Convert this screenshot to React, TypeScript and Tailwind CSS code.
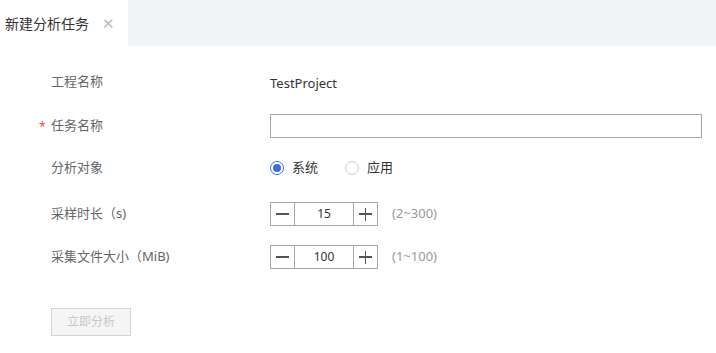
import React, { useState } from 'react';

const font = { fontFamily: '"Noto Sans", "Noto Sans CJK SC", sans-serif' };

const Stepper: React.FC<{ value: number; hint: string }> = ({ value, hint }) => (
  <div className="flex items-center">
    <div className="flex h-[24px] w-[108px] border border-[#a6a6a6]">
      <button className="flex w-[24px] items-center justify-center border-r border-[#a6a6a6]">
        <span className="block h-[1.5px] w-[13px] bg-[#555]" />
      </button>
      <div className="flex flex-1 items-center justify-center text-[12px] text-[#333]">{value}</div>
      <button className="relative flex w-[24px] items-center justify-center border-l border-[#a6a6a6]">
        <span className="absolute h-[1.5px] w-[13px] bg-[#555]" />
        <span className="absolute h-[13px] w-[1.5px] bg-[#555]" />
      </button>
    </div>
    <span className="ml-[14px] text-[13px] text-[#999]">{hint}</span>
  </div>
);

const Row: React.FC<{ label: string; required?: boolean; children: React.ReactNode; h: string }> = ({ label, required, children, h }) => (
  <div className={`flex items-center ${h}`}>
    <div className="relative w-[270px] shrink-0 pl-[51px] text-[13px] text-[#666]">
      {required && <span className="absolute left-[39px] top-[2px] text-[12px] text-[#e5484d]">*</span>}
      {label}
    </div>
    <div className="flex-1">{children}</div>
  </div>
);

export default function App() {
  const [target, setTarget] = useState('sys');
  return (
    <div className="h-[353px] w-[716px] bg-white" style={font}>
      <div className="flex h-[46px] bg-[#f3f4f7]">
        <div className="flex w-[128px] items-center bg-white pl-[5px]">
          <span className="text-[14px] text-[#333]">新建分析任务</span>
          <span className="ml-[13px] text-[15px] leading-none text-[#bbb]">✕</span>
        </div>
      </div>
      <div className="pt-[15px]">
        <Row label="工程名称" h="h-[42px]">
          <span className="text-[13px] text-[#333]">TestProject</span>
        </Row>
        <Row label="任务名称" required h="h-[46px]">
          <input className="h-[24px] w-[432px] border border-[#a6a6a6] bg-white outline-none" />
        </Row>
        <Row label="分析对象" h="h-[38px]">
          <div className="flex items-center text-[13px] text-[#333]">
            <label className="flex items-center" onClick={() => setTarget('sys')}>
              <span className={`flex h-[14px] w-[14px] items-center justify-center rounded-full border ${target === 'sys' ? 'border-[#3e6be0]' : 'border-[#ccc]'}`}>
                {target === 'sys' && <span className="h-[8px] w-[8px] rounded-full bg-[#3e6be0]" />}
              </span>
              <span className="ml-[8px]">系统</span>
            </label>
            <label className="ml-[27px] flex items-center" onClick={() => setTarget('app')}>
              <span className={`flex h-[14px] w-[14px] items-center justify-center rounded-full border ${target === 'app' ? 'border-[#3e6be0]' : 'border-[#ccc]'}`}>
                {target === 'app' && <span className="h-[8px] w-[8px] rounded-full bg-[#3e6be0]" />}
              </span>
              <span className="ml-[8px]">应用</span>
            </label>
          </div>
        </Row>
        <Row label="采样时长（s)" h="h-[54px]">
          <Stepper value={15} hint="(2~300)" />
        </Row>
        <Row label="采集文件大小（MiB)" h="h-[32px]">
          <Stepper value={100} hint="(1~100)" />
        </Row>
        <div className="pl-[51px] pt-[35px]">
          <button className="h-[28px] w-[80px] border border-[#d4d4d4] bg-[#f5f5f5] text-[12px] text-[#c8c8c8]">立即分析</button>
        </div>
      </div>
    </div>
  );
}
